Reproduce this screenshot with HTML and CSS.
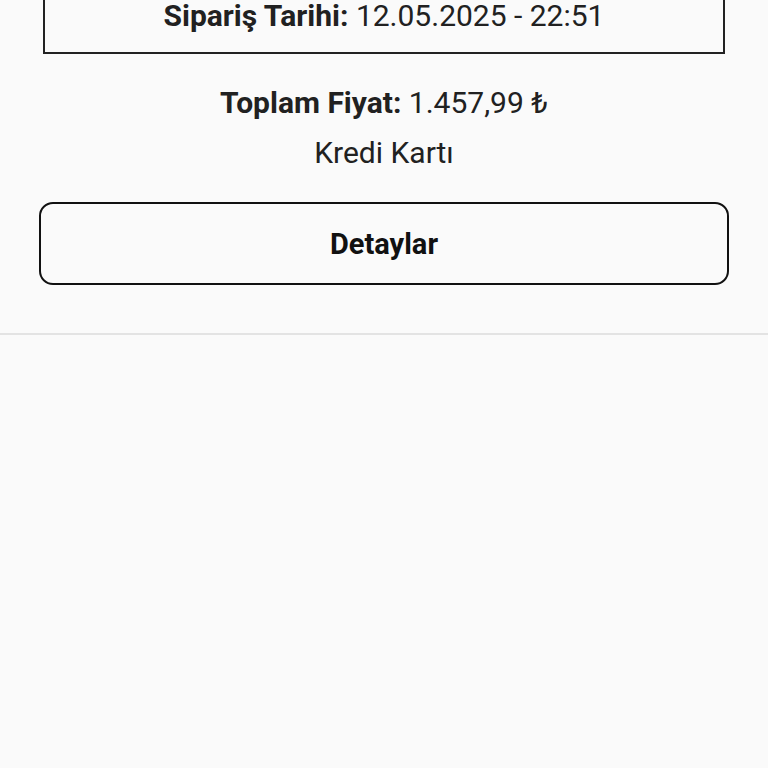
FILE: index.html
```html
<!DOCTYPE html>
<html lang="tr">

<head>
  <meta charset="UTF-8" />
  <meta name="viewport" content="width=device-width, initial-scale=1.0" />
  <title>Siparişlerim</title>
  <link rel="stylesheet" href="styles.css">
</head>

<body>
  <div class="order">
    <div class="date-box">
      <p><b>Sipariş Tarihi:</b> 12.05.2025 - 22:51</p>
    </div>
    <p class="total"><b>Toplam Fiyat:</b> 1.457,99 ₺</p>
    <p class="pay">Kredi Kartı</p>
    <a class="detail-btn" href="javascript:void(0)">Detaylar</a>
  </div>
  <div class="divider"></div>
</body>

</html>
```

FILE: styles.css
```css
html, body, div, p {
  padding: 0;margin: 0;
}
a {
  color: inherit;
  text-decoration: inherit;
}

body {
  background-color: #fafafa;
  color: #212121;
  font-family: Roboto, "Noto Sans", sans-serif;
  font-size: 30px;
  line-height: 36px;
}

.order {
  padding: 0 39px 48px;
}

.order b {
  font-weight: 700;
}

.date-box {
  margin: -40px 4px 0;
  padding: 39px 0 21px;
  border: 2px solid #222;
  text-align: center;
  line-height: 30px;
}

.total {
  margin-top: 31px;
  text-align: center;
}

.pay {
  margin-top: 14px;
  text-align: center;
}

.detail-btn {
  display: flex;
  align-items: center;
  justify-content: center;
  margin-top: 31px;
  height: 83px;
  box-sizing: border-box;
  border: 2px solid #111;
  border-radius: 14px;
  font-size: 29px;
  font-weight: 700;
  color: #111;
}

.divider {
  height: 2px;
  background-color: #e3e3e3;
}
```
